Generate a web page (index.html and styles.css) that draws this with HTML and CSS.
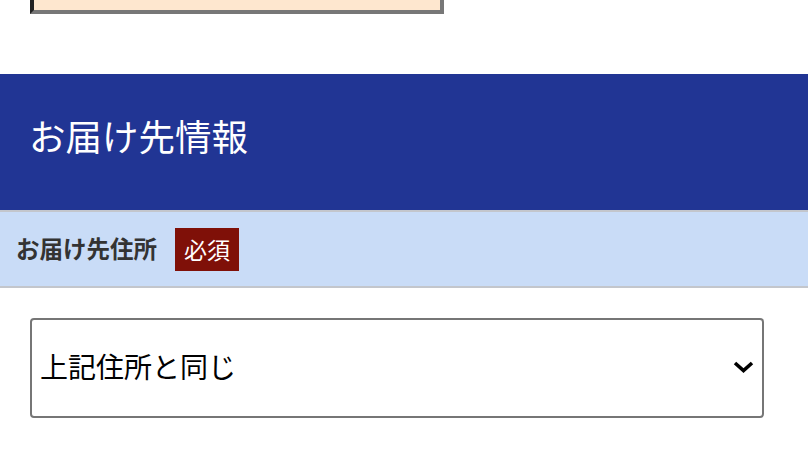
FILE: index.html
```html
<!DOCTYPE html>
<html lang="ja">
<head>
<meta charset="utf-8">
<title>お届け先情報</title>
<link rel="stylesheet" href="styles.css">
</head>
<body>
<div class="page">
  <div class="note-box"></div>
  <h2 class="section-head">お届け先情報</h2>
  <div class="field-label">
    <span class="label-text">お届け先住所</span>
    <span class="badge">必須</span>
  </div>
  <div class="field-body">
    <div class="select-wrap">
      <select class="select">
        <option>上記住所と同じ</option>
        <option>別の住所を指定する</option>
      </select>
      <svg class="chevron" width="22" height="12" viewBox="0 0 22 12" aria-hidden="true">
        <polyline points="2,2 10.5,9.5 19,2" fill="none" stroke="#000" stroke-width="3.6" stroke-linecap="butt" stroke-linejoin="miter"/>
      </svg>
    </div>
  </div>
</div>
</body>
</html>
```
FILE: styles.css
```css
html, body {
  margin: 0;
  padding: 0;
  background: #ffffff;
  overflow: hidden;
}
body {
  font-family: "Noto Sans CJK JP", "Noto Sans", sans-serif;
}
.page {
  display: flex;
  flex-direction: column;
}
.note-box {
  box-sizing: border-box;
  margin: -50px 0 0 30px;
  width: 414px;
  height: 64px;
  background: #fee7cf;
  border: 4px solid #777777;
  border-left-color: #222222;
  border-top-color: #222222;
}
.section-head {
  margin: 60px 0 0 0;
  box-sizing: border-box;
  height: 136px;
  padding: 0 0 11px 29px;
  display: flex;
  align-items: center;
  background: #213594;
  color: #ffffff;
  font-size: 36.5px;
  font-weight: 400;
  line-height: 1;
}
.field-label {
  box-sizing: border-box;
  height: 78px;
  border-top: 2px solid #c3c6cc;
  border-bottom: 2px solid #c3c6cc;
  background: #c9dcf7;
  padding: 0 0 0 16px;
  display: flex;
  align-items: center;
  gap: 18px;
}
.label-text {
  font-size: 23.5px;
  font-weight: 700;
  color: #333333;
  line-height: 1;
}
.badge {
  box-sizing: border-box;
  height: 43px;
  padding: 0 9px;
  display: flex;
  align-items: center;
  background: #7f1008;
  color: #ffffff;
  font-size: 23px;
  line-height: 1;
}
.field-body {
  padding: 30px 44px 0 30px;
}
.select-wrap {
  position: relative;
  width: 734px;
}
.select {
  display: block;
  box-sizing: border-box;
  width: 734px;
  height: 100px;
  margin: 0;
  padding: 0 40px 5px 8px;
  border: 2px solid #767676;
  border-radius: 4px;
  background: #ffffff;
  color: #000000;
  font-family: "Noto Sans CJK JP", "Noto Sans", sans-serif;
  font-size: 28px;
  -webkit-appearance: none;
  appearance: none;
}
.chevron {
  position: absolute;
  right: 9px;
  top: 43px;
  pointer-events: none;
}
```
